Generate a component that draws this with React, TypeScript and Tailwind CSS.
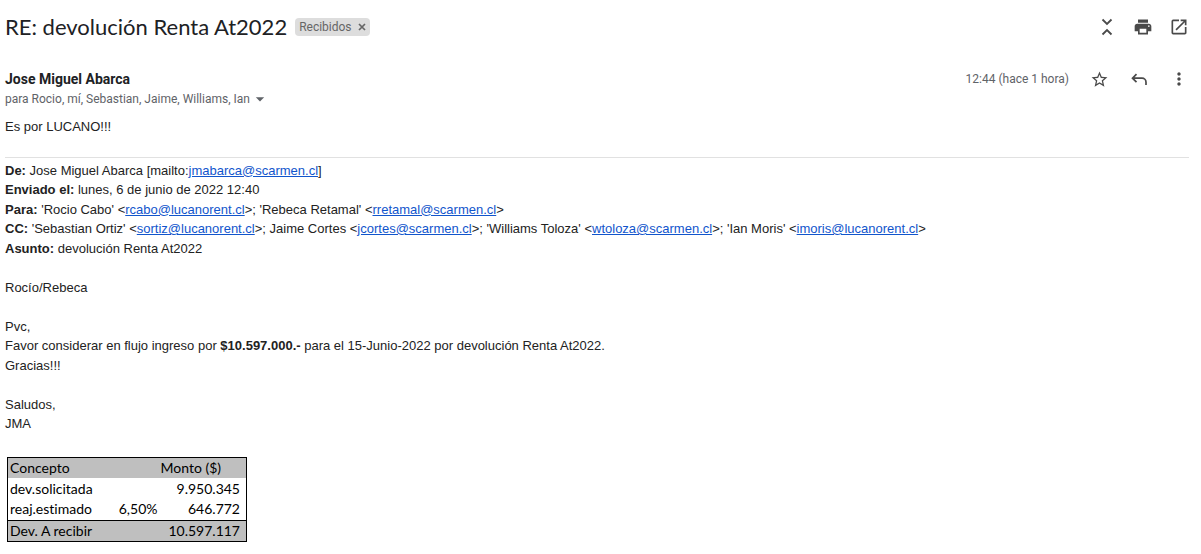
import React from 'react';
import { MdArrowDropDown, MdMoreVert, MdOpenInNew, MdPrint, MdStarBorder } from 'react-icons/md';

interface IconButtonProps {
  label: string;
  children: React.ReactNode;
}

const IconButton: React.FC<IconButtonProps> = ({ label, children }) => (
  <button
    type="button"
    aria-label={label}
    title={label}
    className="flex h-5 w-5 cursor-pointer items-center justify-center text-[#4a4a4a]"
  >
    {children}
  </button>
);

const CollapseIcon = () => (
  <svg className="h-5 w-5" viewBox="0 0 20 20" fill="none" stroke="currentColor" strokeWidth={1.8}>
    <path d="M5.5 2.5 10 7l4.5-4.5M5.5 17.5 10 13l4.5 4.5" />
  </svg>
);

const ReplyIcon = () => (
  <svg className="h-5 w-5" viewBox="0 0 20 20" fill="none" stroke="currentColor" strokeWidth={1.7}>
    <path d="M7.5 5.2 3.5 9.2l4 4M3.5 9.2H13a4 4 0 0 1 4 4V16" />
  </svg>
);

const CloseIcon = () => (
  <svg className="h-2 w-2" viewBox="0 0 8 8" fill="none" stroke="currentColor" strokeWidth={1.7}>
    <path d="m1 1 6 6M7 1 1 7" />
  </svg>
);

const Mail: React.FC<{ address: string }> = ({ address }) => (
  <a href={`mailto:${address}`} className="text-[#1155cc] underline">
    {address}
  </a>
);

const rows = [
  { concept: 'dev.solicitada', rate: '', amount: '9.950.345' },
  { concept: 'reaj.estimado', rate: '6,50%', amount: '646.772' },
];

const RefundTable = () => (
  <table className="mt-[23px] ml-[2px] w-60 table-fixed border-collapse border border-black font-['Lato',sans-serif] text-sm leading-5 text-black [font-variant-ligatures:none]">
    <colgroup>
      <col className="w-[108px]" />
      <col className="w-[42px]" />
      <col />
    </colgroup>
    <thead>
      <tr className="h-[21px] bg-[#bfbfbf]">
        <th scope="col" className="px-[2px] py-0 text-left font-normal">Concepto</th>
        <td />
        <th scope="col" className="py-0 pl-[3px] text-left font-normal">Monto ($)</th>
      </tr>
    </thead>
    <tbody>
      {rows.map((row) => (
        <tr key={row.concept} className="h-[21px]">
          <td className="px-[2px] py-0">{row.concept}</td>
          <td className="p-0 text-right">{row.rate}</td>
          <td className="py-0 pr-[6px] text-right">{row.amount}</td>
        </tr>
      ))}
    </tbody>
    <tfoot>
      <tr className="h-[21px] border-t border-black bg-[#bfbfbf]">
        <td className="px-[2px] py-0">Dev. A recibir</td>
        <td />
        <td className="py-0 pr-[6px] text-right">10.597.117</td>
      </tr>
    </tfoot>
  </table>
);

const App: React.FC = () => {
  return (
    <main className="bg-white pr-3 pb-3 pl-[5px] text-[#222222]">
      {/* Subject */}
      <header className="flex items-center pt-3">
        <h1 className="font-['Lato',sans-serif] text-[22px] leading-[30px] text-[#202124]">
          RE: devolución Renta At2022
        </h1>
        <span className="ml-2 flex h-[18px] items-center rounded bg-[#dddddd] px-1 font-['Roboto',sans-serif] text-xs text-[#666666]">
          Recibidos
          <button type="button" aria-label="Quitar etiqueta Recibidos" className="ml-[6px] cursor-pointer">
            <CloseIcon />
          </button>
        </span>
        <div className="ml-auto flex gap-4">
          <IconButton label="Contraer todo">
            <CollapseIcon />
          </IconButton>
          <IconButton label="Imprimir todo">
            <MdPrint size={20} />
          </IconButton>
          <IconButton label="En una ventana nueva">
            <MdOpenInNew size={20} />
          </IconButton>
        </div>
      </header>

      {/* Sender */}
      <div className="mt-[27px] flex items-start justify-between font-['Roboto',sans-serif]">
        <div>
          <h2 className="text-sm leading-5 font-bold text-[#202124]">Jose Miguel Abarca</h2>
          <button type="button" className="flex cursor-pointer items-center text-xs leading-5 text-[#5f6368]">
            para Rocio, mí, Sebastian, Jaime, Williams, Ian
            <MdArrowDropDown size={20} />
          </button>
        </div>
        <div className="flex items-center gap-5">
          <span className="text-xs leading-5 text-[#5f6368]">12:44 (hace 1 hora)</span>
          <IconButton label="Destacar">
            <MdStarBorder size={19} />
          </IconButton>
          <IconButton label="Responder">
            <ReplyIcon />
          </IconButton>
          <IconButton label="Más">
            <MdMoreVert size={20} />
          </IconButton>
        </div>
      </div>

      {/* Message */}
      <article className="mt-2 font-['Liberation_Sans',Arial,sans-serif] text-[13px] leading-normal">
        <p>Es por LUCANO!!!</p>

        <div className="mt-5 border-t border-[#e1e1e1] pt-[3px]">
          <p>
            <b>De:</b> Jose Miguel Abarca [mailto:<Mail address="jmabarca@scarmen.cl" />]
          </p>
          <p>
            <b>Enviado el:</b> lunes, 6 de junio de 2022 12:40
          </p>
          <p>
            <b>Para:</b> 'Rocio Cabo' &lt;<Mail address="rcabo@lucanorent.cl" />&gt;; 'Rebeca Retamal' &lt;
            <Mail address="rretamal@scarmen.cl" />&gt;
          </p>
          <p>
            <b>CC:</b> 'Sebastian Ortiz' &lt;<Mail address="sortiz@lucanorent.cl" />&gt;; Jaime Cortes &lt;
            <Mail address="jcortes@scarmen.cl" />&gt;; 'Williams Toloza' &lt;
            <Mail address="wtoloza@scarmen.cl" />&gt;; 'Ian Moris' &lt;
            <Mail address="imoris@lucanorent.cl" />&gt;
          </p>
          <p>
            <b>Asunto:</b> devolución Renta At2022
          </p>
        </div>
        <br />
        <p>Rocío/Rebeca</p>
        <br />
        <p>Pvc,</p>
        <p>
          Favor considerar en flujo ingreso por <b>$10.597.000.-</b> para el 15-Junio-2022 por devolución Renta At2022.
        </p>
        <p>Gracias!!!</p>
        <br />
        <p>Saludos,</p>
        <p>JMA</p>

        <RefundTable />
      </article>
    </main>
  );
};

export default App;
